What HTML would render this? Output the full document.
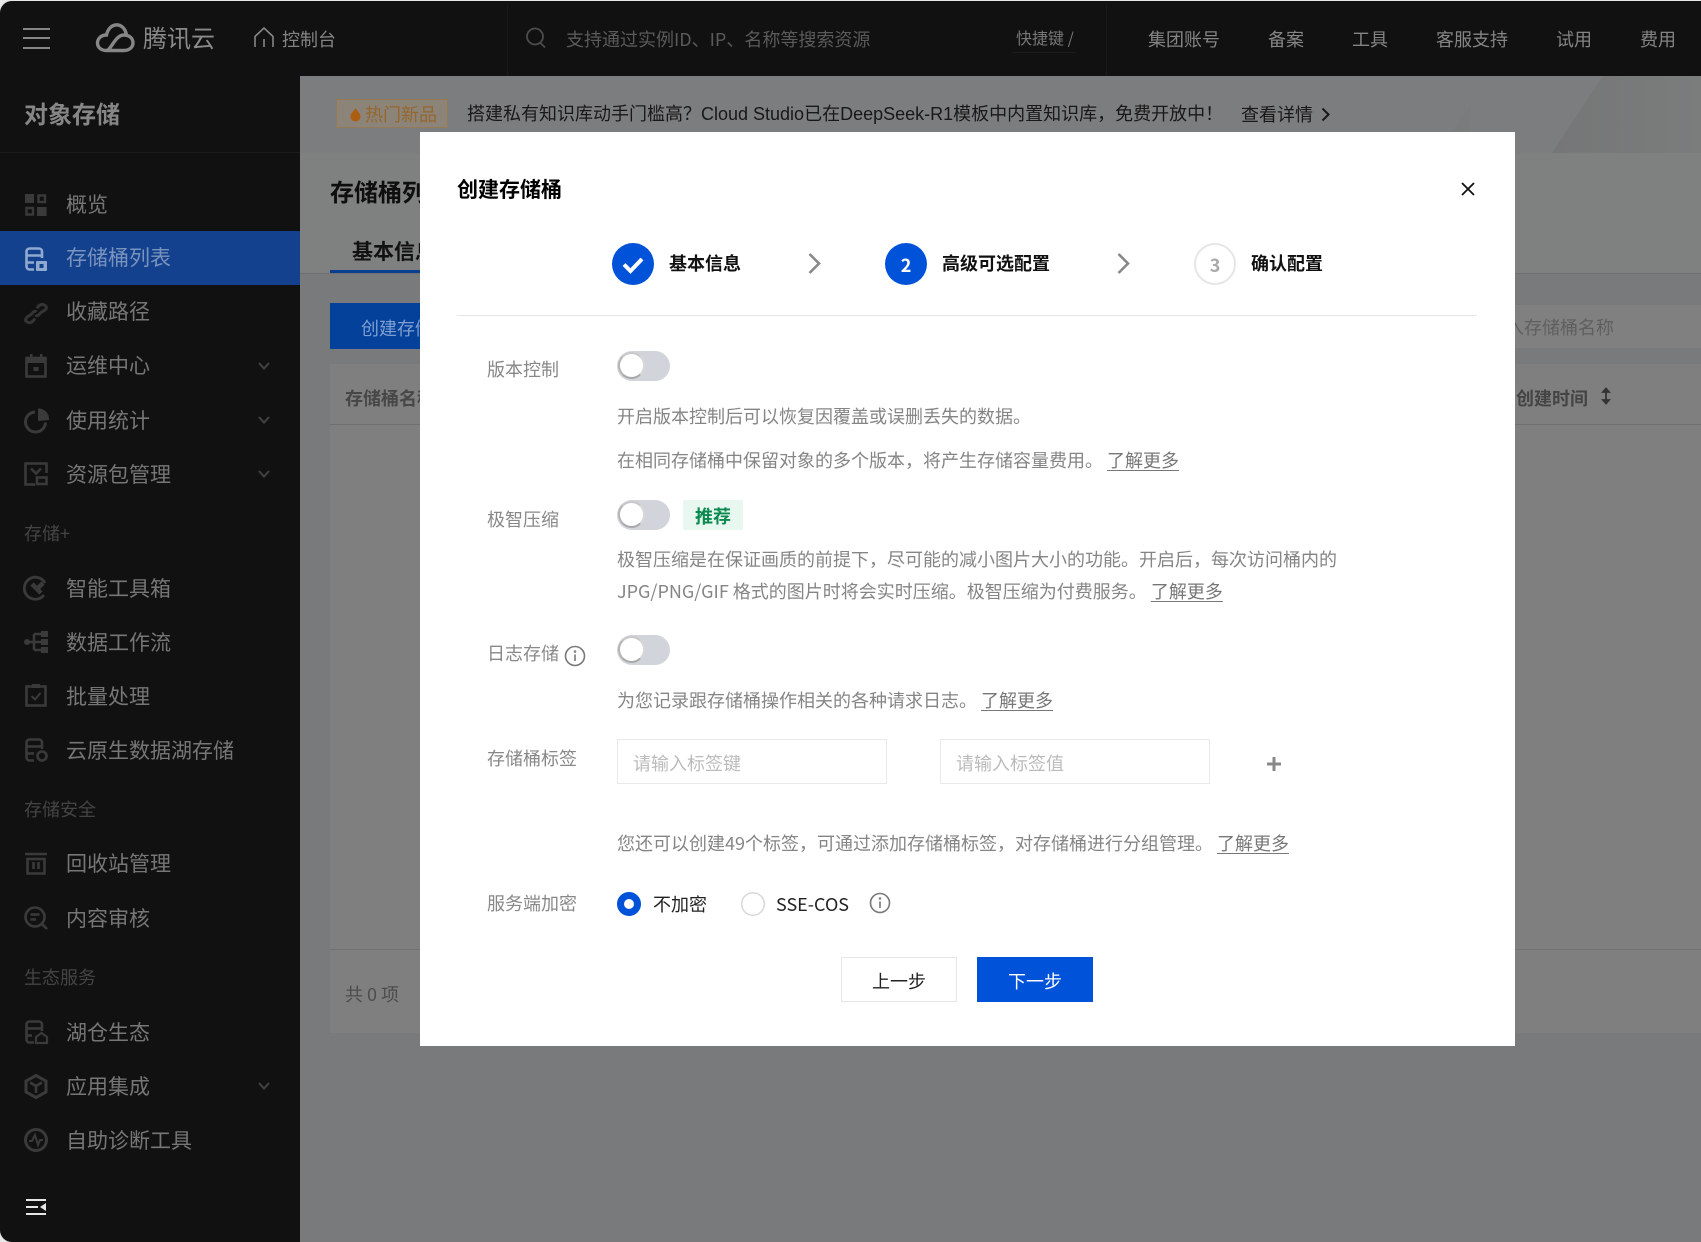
<!DOCTYPE html>
<html lang="zh-CN"><head><meta charset="utf-8"><title>对象存储</title>
<style>
html,body{margin:0;padding:0;width:1701px;height:1242px;overflow:hidden;background:#e8e8e8}
body{font-family:"Liberation Sans","Noto Sans CJK SC",sans-serif;position:relative}
#f{position:absolute;left:0;top:1px;width:1701px;height:1241px;border-radius:12px 0 0 12px;overflow:hidden;background:#797a7c}
#w{position:absolute;left:0;top:-1px;width:1701px;height:1242px}
.t{position:absolute;white-space:nowrap;line-height:30px;height:30px;font-size:18px;font-family:"Noto Sans CJK SC",sans-serif}
.b{position:absolute}
svg{position:absolute;overflow:visible}
.s{left:66px;font-size:21px;color:#767676}
.h{left:24px;font-size:18px;color:#444}
.i{left:24px;width:24px;height:24px;fill:none;stroke:#3a3a3a;stroke-width:2.6}
.i .k{fill:#3a3a3a;stroke:none}
.c{left:258px;width:12px;height:8px;fill:none;stroke:#424242;stroke-width:2}
.n{color:#848484;top:24px}
.l{left:487px;color:#888}
.d{left:617px;color:#858585}
.d u,.u{color:#777;text-decoration:underline;text-underline-offset:3px}
.g{position:absolute;left:617px;width:53px;height:30px;border-radius:15px;background:#d1d4da}
.g:after{content:"";position:absolute;left:1px;top:1px;width:23px;height:23px;border-radius:50%;background:#fff;border:2.5px solid #a9a9a9;border-top-color:#c8c8c8;border-left-color:#b5b5b5;border-right-color:#d8d8d8}
.p{position:absolute;height:45px;box-sizing:border-box;border:1.5px solid #e9e9e9;background:#fff}
.st{font-weight:700;color:#111;top:248px}
</style></head><body>
<div id="f"><div id="w">

<!-- header -->
<div class="b" style="left:0;top:0;width:1701px;height:76px;background:#111"></div>
<div class="b" style="left:507px;top:5px;width:1px;height:71px;background:#191919"></div>
<div class="b" style="left:1106px;top:5px;width:1px;height:71px;background:#191919"></div>
<div class="b" style="left:23px;top:28px;width:27px;height:2px;background:#868686"></div>
<div class="b" style="left:23px;top:37px;width:27px;height:2px;background:#868686"></div>
<div class="b" style="left:23px;top:47px;width:27px;height:2px;background:#868686"></div>
<svg style="left:0;top:0" width="300" height="76" fill="none" stroke="#868686"><path stroke-width="3.4" d="M126.500 35C124 21 109 22 106.500 35C95 35 94 50.500 106.500 50.500L124 50.500C136 50.500 136 35 124 35C115 35 111 50.500 106.500 50.500"/><path stroke-width="1.6" d="M255 47V36.500L264 28L273 36.500V47M264 39V47"/></svg>
<div class="t" style="left:143px;top:22px;font-size:24px;color:#8a8a8a">腾讯云</div>
<div class="t n" style="left:282px">控制台</div>
<svg style="left:526px;top:28px" width="22" height="22" fill="none" stroke="#4c4c4c" stroke-width="1.8"><circle cx="9" cy="8.500" r="8"/><path d="M14.500 15L19 19.500"/></svg>
<div class="t" style="left:566px;top:24px;color:#5a5a5a">支持通过实例ID、IP、名称等搜索资源</div>
<div class="t" style="left:1016px;top:22px;font-size:16px;color:#767676">快捷键 /</div>
<div class="b" style="left:1012px;top:52px;width:64px;height:1px;background:#1c1c1c"></div>
<div class="t n" style="left:1148px">集团账号</div>
<div class="t n" style="left:1268px">备案</div>
<div class="t n" style="left:1352px">工具</div>
<div class="t n" style="left:1436px">客服支持</div>
<div class="t n" style="left:1556px">试用</div>
<div class="t n" style="left:1640px">费用</div>

<!-- sidebar -->
<div class="b" style="left:0;top:76px;width:300px;height:1166px;background:#111"></div>
<div class="b" style="left:0;top:152px;width:300px;height:1px;background:#1b1b1b"></div>
<div class="t" style="left:24px;top:98px;font-size:24px;font-weight:700;color:#868686">对象存储</div>
<div class="b" style="left:0;top:231px;width:300px;height:54px;background:#13418d"></div>

<svg class="i" style="top:193px"><rect class="k" x="1" y="1" width="9" height="9"/><rect x="14.500" y="2.500" width="6.500" height="6.500" stroke-width="2.400"/><rect x="2.500" y="15" width="6.500" height="6.500" stroke-width="2.400"/><rect class="k" x="13" y="14" width="9.500" height="9"/></svg>
<div class="t s" style="top:189px">概览</div>

<svg class="i" style="top:247px;stroke:#90a9d0"><path d="M10 22.500H5.500a3 3 0 0 1-3-3V4.500a3 3 0 0 1 3-3h9.500a3 3 0 0 1 3 3V11M2.500 8.500H18M2.500 15.500H10"/><rect x="12" y="14" width="11" height="10" rx="1" style="fill:#90a9d0;stroke:none"/><rect x="15.500" y="17" width="4" height="4" style="fill:#13418d;stroke:none"/></svg>
<div class="t s" style="top:242px;color:#7a93bd">存储桶列表</div>

<svg class="i" style="top:301px;stroke-width:3;stroke:#343434"><path d="M2 21C0 16 6 15 8 12.500C10 10 11 9.500 12.500 11M22 5C24 9 18 10 16 12.500C14 15 13 15.500 11.500 14M13 7.500C15 3 19 2.500 22 5M11 17.500C8 22 5 23 2 20"/></svg>
<div class="t s" style="top:296px">收藏路径</div>

<svg class="i" style="top:354px"><rect x="2.500" y="4" width="19" height="18.500"/><rect class="k" x="2" y="3" width="20" height="6"/><rect class="k" x="6" y="0" width="2.500" height="5"/><rect class="k" x="16" y="0" width="2.500" height="5"/><rect class="k" x="9.500" y="13" width="5" height="4"/></svg>
<div class="t s" style="top:350px">运维中心</div>
<svg class="c" style="top:362px"><path d="M1 1L6 6.500L11 1"/></svg>

<svg class="i" style="top:408px"><path d="M11 4A10 10 0 1 0 21.500 14.500" stroke-width="3"/><path class="k" d="M14 0.500A10.500 10.500 0 0 1 25 12L14 13Z"/></svg>
<div class="t s" style="top:405px">使用统计</div>
<svg class="c" style="top:416px"><path d="M1 1L6 6.500L11 1"/></svg>

<svg class="i" style="top:462px"><path d="M11 22.500H1.500V1.500H22.500V11M7 6.500L12 11.500L17 6.500"/><rect x="13" y="15.500" width="9.500" height="6.500"/></svg>
<div class="t s" style="top:459px">资源包管理</div>
<svg class="c" style="top:470px"><path d="M1 1L6 6.500L11 1"/></svg>

<div class="t h" style="top:518px">存储+</div>

<svg class="i" style="top:576px"><path d="M21 7A11 11 0 1 0 20 19" stroke-width="2.800"/><path d="M8 8L17 17M14 12L19 7" stroke-width="4.500"/></svg>
<div class="t s" style="top:573px">智能工具箱</div>

<svg class="i" style="top:630px"><circle class="k" cx="3" cy="12" r="3"/><path d="M3 12H10M10 4V20M10 4H17M10 12H17M10 20H17"/><rect class="k" x="17" y="1" width="7" height="6"/><rect class="k" x="17" y="9" width="7" height="6"/><rect class="k" x="17" y="17" width="7" height="6"/></svg>
<div class="t s" style="top:627px">数据工作流</div>

<svg class="i" style="top:684px"><rect x="2.500" y="2.500" width="19" height="19"/><path class="k" d="M8 0H16V4H8Z"/><path d="M7.500 12L11 15.500L16.500 9" stroke-width="2"/></svg>
<div class="t s" style="top:681px">批量处理</div>

<svg class="i" style="top:738px"><path d="M10 22.500H5.500a3 3 0 0 1-3-3V4.500a3 3 0 0 1 3-3h9.500a3 3 0 0 1 3 3V11M2.500 8.500H18M2.500 15.500H10"/><circle cx="18" cy="18" r="4.500"/></svg>
<div class="t s" style="top:735px">云原生数据湖存储</div>

<div class="t h" style="top:794px">存储安全</div>

<svg class="i" style="top:851px"><path d="M1 3H23M3.500 8H20.500V22.500H3.500ZM9.500 11V18M14.500 11V18"/></svg>
<div class="t s" style="top:848px">回收站管理</div>

<svg class="i" style="top:906px"><circle cx="11" cy="11" r="9.500"/><path d="M6.500 8.500H15.500M6.500 13.500H12M18 18L23 23"/></svg>
<div class="t s" style="top:903px">内容审核</div>

<div class="t h" style="top:962px">生态服务</div>

<svg class="i" style="top:1020px"><path d="M10 22.500H5.500a3 3 0 0 1-3-3V4.500a3 3 0 0 1 3-3h9.500a3 3 0 0 1 3 3V11M2.500 8.500H18M2.500 15.500H8"/><path d="M12 23V17L17.500 13L23 17V23Z" stroke-width="2.200"/></svg>
<div class="t s" style="top:1017px">湖仓生态</div>

<svg class="i" style="top:1074px"><path d="M12 1.500L22 7V18L12 23.500L2 18V7Z" stroke-width="3"/><path d="M12 12V19M12 12L6 8.500M12 12L18 8.500" stroke-width="2.600"/></svg>
<div class="t s" style="top:1071px">应用集成</div>
<svg class="c" style="top:1082px"><path d="M1 1L6 6.500L11 1"/></svg>

<svg class="i" style="top:1128px"><circle cx="12" cy="12" r="10.500" stroke-width="3"/><path d="M5 13H8L11 7L14 17L16 12H19" stroke-width="2"/></svg>
<div class="t s" style="top:1125px">自助诊断工具</div>

<div class="b" style="left:26px;top:1199px;width:20px;height:2px;background:#e6e6e6"></div>
<div class="b" style="left:26px;top:1206px;width:12px;height:2px;background:#e6e6e6"></div>
<div class="b" style="left:26px;top:1213px;width:20px;height:2px;background:#e6e6e6"></div>
<svg style="left:40px;top:1203px" width="6" height="8"><path fill="#e6e6e6" d="M6 0V8L0 4Z"/></svg>

<!-- main -->
<div class="b" style="left:300px;top:76px;width:1401px;height:77px;background:#7c7d7e"></div>
<svg style="left:1400px;top:76px" width="301" height="77"><defs><linearGradient id="q" x1="0" x2="1" y1="0" y2="0"><stop offset="0" stop-color="#757677"/><stop offset="1" stop-color="#7b7c7c"/></linearGradient></defs><path fill="url(#q)" d="M152 77L203 0H301V77Z"/><path fill="#7a7b7b" d="M40 77L70 30V77Z"/></svg>
<div class="b" style="left:300px;top:153px;width:1401px;height:120px;background:#7f8080"></div>
<div class="b" style="left:300px;top:273px;width:1401px;height:1px;background:#6f7071"></div>
<div class="b" style="left:336px;top:99px;width:112px;height:29px;box-sizing:border-box;background:#8c8478;border:1.500px solid #957a58"></div>
<svg style="left:350px;top:107px" width="11" height="15"><path fill="#ac5e10" d="M5.500 1C7 4 10.500 6 10.500 9.500A5 5 0 0 1 .5 9.500C.5 6 4 4 5.500 1Z"/></svg>
<div class="t" style="left:365px;top:99px;color:#96662c">热门新品</div>
<div class="t" style="left:467px;top:99px;color:#181818;font-family:'Liberation Sans','Noto Sans CJK SC',sans-serif">搭建私有知识库动手门槛高？Cloud Studio已在DeepSeek-R1模板中内置知识库，免费开放中！</div>
<div class="t" style="left:1241px;top:99px;color:#181818">查看详情</div>
<svg style="left:1321px;top:107px" width="9" height="15" fill="none" stroke="#181818" stroke-width="2"><path d="M1.500 1.500L7.500 7.500L1.500 13.500"/></svg>
<div class="t" style="left:330px;top:176px;font-size:24px;font-weight:700;color:#0e0e0e">存储桶列表</div>
<div class="t" style="left:352px;top:236px;font-size:21px;font-weight:700;color:#111">基本信息</div>
<div class="b" style="left:330px;top:270px;width:120px;height:3px;background:#0a3f8f"></div>
<div class="b" style="left:330px;top:303px;width:140px;height:46px;background:#03419b"></div>
<div class="t" style="left:361px;top:313px;color:#7f9fd0">创建存储桶</div>
<div class="b" style="left:1400px;top:305px;width:301px;height:43px;background:#808080"></div>
<div class="t" style="left:1488px;top:312px;color:#5f5f5f">输入存储桶名称</div>
<div class="b" style="left:330px;top:364px;width:1371px;height:669px;background:#7f7f7f"></div>
<div class="b" style="left:330px;top:424px;width:1371px;height:1px;background:#6f6f6f"></div>
<div class="b" style="left:330px;top:949px;width:1371px;height:1px;background:#727272"></div>
<div class="t" style="left:345px;top:383px;font-weight:700;color:#474747">存储桶名称</div>
<div class="t" style="left:1516px;top:383px;font-weight:700;color:#444">创建时间</div>
<svg style="left:1601px;top:387px" width="10" height="18" fill="none" stroke="#333" stroke-width="1.800"><path d="M5 1V17"/><path fill="#333" d="M2 5L5 1.500L8 5ZM2 13L5 16.500L8 13Z"/></svg>
<div class="t" style="left:345px;top:979px;color:#4c4c4c">共 0 项</div>

<!-- modal -->
<div class="b" style="left:420px;top:132px;width:1095px;height:914px;background:#fff"></div>
<div class="t" style="left:457px;top:174px;font-size:21px;font-weight:700;color:#000">创建存储桶</div>
<svg style="left:1461px;top:182px" width="14" height="14" fill="none" stroke="#111" stroke-width="1.800"><path d="M1 1L13 13M13 1L1 13"/></svg>

<svg style="left:612px;top:243px" width="42" height="42"><circle cx="21" cy="21" r="21" fill="#0052d9"/><path fill="none" stroke="#fff" stroke-width="4" d="M12 21.500L18.500 28L30 16"/></svg>
<div class="t st" style="left:669px">基本信息</div>
<svg style="left:808px;top:253px" width="13" height="21" fill="none" stroke="#888" stroke-width="2.600"><path d="M1.500 1L11 10.500L1.500 20"/></svg>
<div class="b" style="left:885px;top:243px;width:42px;height:42px;border-radius:50%;background:#0052d9"></div>
<div class="t" style="left:885px;top:250px;width:42px;text-align:center;color:#fff;font-weight:700;font-size:18px">2</div>
<div class="t st" style="left:942px">高级可选配置</div>
<svg style="left:1117px;top:253px" width="13" height="21" fill="none" stroke="#888" stroke-width="2.600"><path d="M1.500 1L11 10.500L1.500 20"/></svg>
<div class="b" style="left:1194px;top:243px;width:42px;height:42px;box-sizing:border-box;border-radius:50%;border:2.500px solid #e6e6e6"></div>
<div class="t" style="left:1194px;top:250px;width:42px;text-align:center;color:#aaa;font-weight:700;font-size:18px">3</div>
<div class="t st" style="left:1251px">确认配置</div>
<div class="b" style="left:457px;top:315px;width:1020px;height:1px;background:#e4e4e4"></div>

<div class="t l" style="top:354px">版本控制</div>
<div class="g" style="top:351px"></div>
<div class="t d" style="top:401px">开启版本控制后可以恢复因覆盖或误删丢失的数据。</div>
<div class="t d" style="top:445px">在相同存储桶中保留对象的多个版本，将产生存储容量费用。 <u>了解更多</u></div>

<div class="t l" style="top:504px">极智压缩</div>
<div class="g" style="top:500px"></div>
<div class="b" style="left:683px;top:500px;width:60px;height:30px;background:#e8f7ef;border-radius:2px"></div>
<div class="t" style="left:695px;top:501px;color:#0a8a4e;font-weight:700">推荐</div>
<div class="t d" style="top:544px">极智压缩是在保证画质的前提下，尽可能的减小图片大小的功能。开启后，每次访问桶内的</div>
<div class="t d" style="top:576px">JPG/PNG/GIF 格式的图片时将会实时压缩。极智压缩为付费服务。 <u>了解更多</u></div>

<div class="t l" style="top:638px">日志存储</div>
<svg style="left:564px;top:645px" width="22" height="22" fill="none" stroke="#777" stroke-width="1.600"><circle cx="11" cy="11" r="9.500"/><path d="M11 9.500V16"/><circle cx="11" cy="6.500" r=".5"/></svg>
<div class="g" style="top:635px"></div>
<div class="t d" style="top:685px">为您记录跟存储桶操作相关的各种请求日志。 <u>了解更多</u></div>

<div class="t l" style="top:743px">存储桶标签</div>
<div class="p" style="left:617px;top:739px;width:270px"></div>
<div class="p" style="left:940px;top:739px;width:270px"></div>
<div class="t" style="left:633px;top:748px;color:#bbb">请输入标签键</div>
<div class="t" style="left:956px;top:748px;color:#bbb">请输入标签值</div>
<svg style="left:1266px;top:756px" width="16" height="16" stroke="#888" stroke-width="3"><path d="M8 1V15M1 8H15"/></svg>
<div class="t d" style="top:828px">您还可以创建49个标签，可通过添加存储桶标签，对存储桶进行分组管理。 <u>了解更多</u></div>

<div class="t l" style="top:888px">服务端加密</div>
<svg style="left:617px;top:892px" width="24" height="24"><circle cx="12" cy="12" r="8.500" fill="#fff" stroke="#0052d9" stroke-width="7"/></svg>
<div class="t" style="left:653px;top:889px;color:#222">不加密</div>
<svg style="left:741px;top:892px" width="24" height="24"><circle cx="12" cy="12" r="11.300" fill="#fff" stroke="#d8d8d8" stroke-width="1.500"/></svg>
<div class="t" style="left:776px;top:889px;color:#222">SSE-COS</div>
<svg style="left:869px;top:892px" width="22" height="22" fill="none" stroke="#777" stroke-width="1.600"><circle cx="11" cy="11" r="9.500"/><path d="M11 9.500V16"/><circle cx="11" cy="6.500" r=".5"/></svg>

<div class="b" style="left:841px;top:957px;width:116px;height:45px;box-sizing:border-box;border:1.500px solid #e6e6e6;background:#fff"></div>
<div class="t" style="left:841px;top:966px;width:116px;text-align:center;color:#222">上一步</div>
<div class="b" style="left:977px;top:957px;width:116px;height:45px;background:#0052d9"></div>
<div class="t" style="left:977px;top:966px;width:116px;text-align:center;color:#fff">下一步</div>

</div></div>
</body></html>
